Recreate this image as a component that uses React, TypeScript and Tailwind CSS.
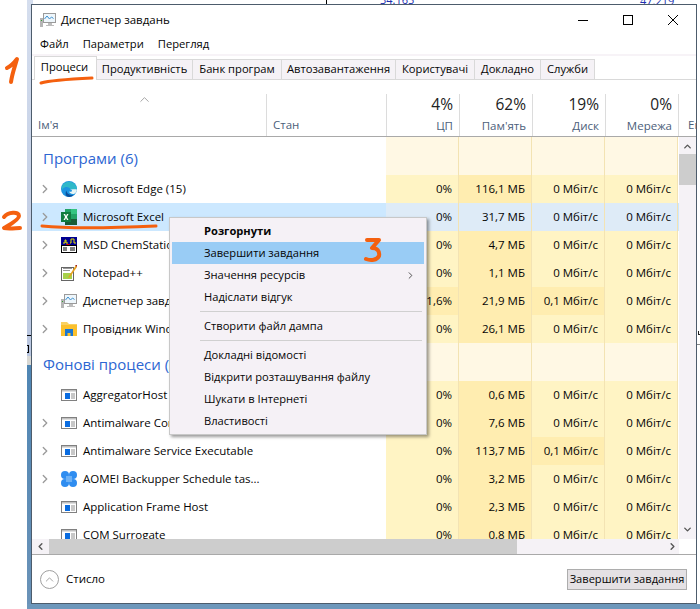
import { ChevronRight, ChevronUp, ChevronDown, ChevronLeft } from "lucide-react";

type Row = { name: string; icon: string; arrow: boolean; cpu: string; mem: string; disk: string; net: string };

const apps: Row[] = [
  { name: "Microsoft Edge (15)", icon: "edge", arrow: true, cpu: "0%", mem: "116,1 МБ", disk: "0 Мбіт/с", net: "0 Мбіт/с" },
  { name: "Microsoft Excel", icon: "excel", arrow: true, cpu: "0%", mem: "31,7 МБ", disk: "0 Мбіт/с", net: "0 Мбіт/с" },
  { name: "MSD ChemStation", icon: "chem", arrow: true, cpu: "0%", mem: "4,7 МБ", disk: "0 Мбіт/с", net: "0 Мбіт/с" },
  { name: "Notepad++", icon: "notepad", arrow: true, cpu: "0%", mem: "1,1 МБ", disk: "0 Мбіт/с", net: "0 Мбіт/с" },
  { name: "Диспетчер завдань", icon: "taskmgr", arrow: true, cpu: "1,6%", mem: "21,9 МБ", disk: "0,1 Мбіт/с", net: "0 Мбіт/с" },
  { name: "Провідник Windows", icon: "folder", arrow: true, cpu: "0%", mem: "26,1 МБ", disk: "0 Мбіт/с", net: "0 Мбіт/с" },
];

const background: Row[] = [
  { name: "AggregatorHost", icon: "svc", arrow: false, cpu: "0%", mem: "0,6 МБ", disk: "0 Мбіт/с", net: "0 Мбіт/с" },
  { name: "Antimalware Core Service", icon: "svc", arrow: true, cpu: "0%", mem: "7,6 МБ", disk: "0 Мбіт/с", net: "0 Мбіт/с" },
  { name: "Antimalware Service Executable", icon: "svc", arrow: true, cpu: "0%", mem: "113,7 МБ", disk: "0,1 Мбіт/с", net: "0 Мбіт/с" },
  { name: "AOMEI Backupper Schedule tas...", icon: "aomei", arrow: true, cpu: "0%", mem: "3,2 МБ", disk: "0 Мбіт/с", net: "0 Мбіт/с" },
  { name: "Application Frame Host", icon: "svc", arrow: false, cpu: "0%", mem: "2,3 МБ", disk: "0 Мбіт/с", net: "0 Мбіт/с" },
  { name: "COM Surrogate", icon: "svc", arrow: false, cpu: "0%", mem: "0,8 МБ", disk: "0 Мбіт/с", net: "0 Мбіт/с" },
];

const tabs = [
  { label: "Продуктивність", width: "w-[96px]" },
  { label: "Банк програм", width: "w-[89px]" },
  { label: "Автозавантаження", width: "w-[114px]" },
  { label: "Користувачі", width: "w-[79px]" },
  { label: "Докладно", width: "w-[66px]" },
  { label: "Служби", width: "w-[54px]" },
];

function AppIcon({ kind }: { kind: string }) {
  if (kind === "edge")
    return (
      <svg width="16" height="16" viewBox="0 0 16 16">
        <circle cx="8" cy="8" r="8" fill="#1c93e0" />
        <path d="M1.500 4C4 0 12-1 15 5c.5 1 .8 2 .9 3.500H9.500C9 6.500 6 5.500 3.500 6.500 2.500 7 1.500 8 1 9c-.5-2 0-3.500.5-5z" fill="#2fb8c8" />
        <path d="M5.500 9.500c0 3 3 5 7 4.500C10.500 16 8 16.300 6 15.500 4 14 4.500 11 5.500 9.500z" fill="#0a4f9c" />
        <path d="M9 8.500c3 0 6-.5 6.800 0C16 11 14 13 12 13c-2 0-3.500-1-4-2.500C9 11 11 11 11 9.800 11 9 10 8.700 9 8.500z" fill="#e8f6f5" />
      </svg>
    );
  if (kind === "excel")
    return (
      <svg width="16" height="16" viewBox="0 0 16 16">
        <rect x="4" y="0" width="12" height="16" fill="#21a366" />
        <rect x="10" y="0" width="6" height="5" fill="#33c481" />
        <rect x="4" y="10" width="12" height="6" fill="#185c37" />
        <rect x="0" y="3" width="10" height="10" fill="#107c41" />
        <path d="M2.500 5h1.600L5 7l1-2h1.500L5.900 8l1.600 3H6L5 9l-1 2H2.500l1.600-3z" fill="#fff" />
      </svg>
    );
  if (kind === "chem")
    return (
      <svg width="16" height="16" viewBox="0 0 16 16">
        <rect x="0" y="0" width="16" height="8" fill="#000090" />
        <path d="M2 6h2V3h1v3h2M9 6h1V2h3v4h2" fill="none" stroke="#e6e600" strokeWidth="1" />
        <path d="M5 7h4L7 10z" fill="#e00000" />
        <rect x="0.500" y="8.500" width="15" height="7" fill="#fff" stroke="#000" />
        <path d="M2 11h4M9 11h5M2 13h4M9 13h5" stroke="#000" />
      </svg>
    );
  if (kind === "notepad")
    return (
      <svg width="16" height="16" viewBox="0 0 16 16">
        <rect x="0.500" y="2.500" width="12" height="13" fill="#fff" stroke="#666" />
        <rect x="2" y="8" width="9" height="6" fill="#a6d14b" />
        <path d="M2 3.500h9M2 5.500h7" stroke="#999" />
        <path d="M15 0L8 11l-1 2 2-1 7-10z" fill="#e8a020" />
        <path d="M14 0h2v2z" fill="#a02020" />
      </svg>
    );
  if (kind === "taskmgr") return <MonitorIcon />;
  if (kind === "folder")
    return (
      <svg width="16" height="16" viewBox="0 0 16 16">
        <path d="M0 1h6l2 2h8v12H0z" fill="#f9d162" />
        <rect x="0" y="4" width="16" height="11" fill="#fbc02d" />
        <path d="M4 15V8h8v7h-2.500v-3h-3v3z" fill="#1976d2" />
      </svg>
    );
  if (kind === "aomei")
    return (
      <svg width="16" height="16" viewBox="0 0 16 16">
        <circle cx="4" cy="4" r="4" fill="#2f8df0" />
        <circle cx="12" cy="4" r="4" fill="#2f8df0" />
        <circle cx="4" cy="12" r="4" fill="#2f8df0" />
        <circle cx="12" cy="12" r="4" fill="#2f8df0" />
        <rect x="5" y="5" width="6" height="6" fill="#6db1f5" />
      </svg>
    );
  return (
    <svg width="16" height="16" viewBox="0 0 16 16">
      <rect x="0.500" y="2.500" width="15" height="11" fill="#fff" stroke="#808080" />
      <rect x="1" y="3" width="14" height="1.500" fill="#c0c0c0" />
      <rect x="4" y="6" width="5" height="6" fill="#0a6ce0" />
      <path d="M10 7h4M10 9h4M10 11h4" stroke="#909090" />
    </svg>
  );
}

function MonitorIcon() {
  return (
    <svg width="16" height="16" viewBox="0 0 16 16">
      <rect x="0" y="6" width="3" height="9" fill="#b5b5b5" />
      <rect x="1" y="8" width="1" height="1" fill="#30a030" />
      <rect x="3.500" y="1.500" width="12" height="9" fill="#eef6fb" stroke="#9a9a9a" />
      <path d="M4.500 7l2.500-3 2.500 3 2-2 2 1.500" fill="none" stroke="#3a8fd0" />
      <path d="M8 11h4v2h2v1H6v-1h2z" fill="#bdbdbd" />
    </svg>
  );
}

function DataRow({ row, selected }: { row: Row; selected?: boolean }) {
  const cell = "h-full flex items-center justify-end pr-[6px] pb-[1px] border-r border-[#f3e3b3]";
  const base = selected ? "bg-[#deebf7]" : "bg-[#fff4c4]";
  const memBg = selected ? "bg-[#deebf7]" : "bg-[#ffedb0]";
  return (
    <div className={`flex h-[28px] shrink-0 ${selected ? "bg-[#cce8ff]" : ""}`}>
      <div className="w-[268px] shrink-0 flex items-center pb-[1px]">
        <span className="w-[24px] flex justify-center pl-[1px] shrink-0">
          {row.arrow && <ChevronRight size={14} strokeWidth={2.250} className="text-[#9a9a9a]" />}
        </span>
        <span className="ml-[5px] mr-[6px] shrink-0 flex">
          <AppIcon kind={row.icon} />
        </span>
        <span className="whitespace-nowrap">{row.name}</span>
      </div>
      <div className="w-[86px] shrink-0" />
      <div className={`w-[73px] shrink-0 ${cell} ${row.cpu === "1,6%" ? "bg-[#ffedb0]" : base}`}>{row.cpu}</div>
      <div className={`w-[73px] shrink-0 ${cell} ${memBg}`}>{row.mem}</div>
      <div className={`w-[73px] shrink-0 ${cell} ${row.disk === "0,1 Мбіт/с" ? "bg-[#ffedb0]" : base}`}>{row.disk}</div>
      <div className={`w-[73px] shrink-0 ${cell} ${base}`}>{row.net}</div>
    </div>
  );
}

function GroupRow({ title }: { title: string }) {
  const cell = "w-[73px] shrink-0 bg-[#fff8e4] border-r border-[#f3e3b3]";
  return (
    <div className="flex shrink-0 h-[38px]">
      <div className="w-[354px] shrink-0 flex items-end pb-[6px] pl-[11px] text-[15px] text-[#2d66d2]">{title}</div>
      <div className={cell} />
      <div className={cell} />
      <div className={cell} />
      <div className={cell} />
    </div>
  );
}

function HeadCol({ pct, label }: { pct: string; label: string }) {
  return (
    <div className="w-[73px] shrink-0 border-r border-[#dcdcdc] flex flex-col items-end pr-[6px]">
      <span className="text-[15.500px] leading-[20px] text-[#222]">{pct}</span>
      <span className="mt-[4px] leading-[16px] text-[#4c607a]">{label}</span>
    </div>
  );
}

function MenuItem({ label, bold, active, arrow }: { label: string; bold?: boolean; active?: boolean; arrow?: boolean }) {
  return (
    <div className={`h-[22px] flex items-center pl-[32px] pr-[8px] justify-between ${active ? "bg-[#99ccf5]" : ""} ${bold ? "font-bold" : ""}`}>
      <span>{label}</span>
      {arrow && <ChevronRight size={11} className="text-[#444]" />}
    </div>
  );
}

export default function App() {
  return (
    <div className="relative w-[700px] h-[609px] overflow-hidden bg-white font-['Open_Sans','Noto_Sans',sans-serif] text-[11.500px] text-[#050505]">
      {/* desktop behind the window */}
      <div className="absolute left-[27px] top-0 w-[6px] h-[356px] bg-linear-to-b from-[#d5deee] to-[#b9c6e0]" />
      <div className="absolute left-[27px] top-[356px] w-[6px] h-[9px] bg-[#d8d8d4]" />
      <div className="absolute left-[27px] top-[365px] w-[6px] h-[244px] bg-linear-to-b from-[#4f86b4] to-[#6b93b8]" />
      <div className="absolute left-[27px] top-[604px] w-[673px] h-[5px] bg-[#6d97bb]" />
      <div className="absolute left-[27px] top-[335px] w-[5px] h-px bg-black" />
      <div className="absolute left-[27px] top-[345px] w-[2px] h-[8px] border-r border-y border-black" />
      <div className="absolute left-[697px] top-[344px] w-[3px] h-px bg-[#888]" />
      <div className="absolute left-[698px] top-[331px] w-[2px] h-[4px] border-l border-b border-[#222]" />
      <div className="absolute left-[326px] top-0 w-px h-[5px] bg-black" />
      <div className="absolute left-[380px] top-[-8px] text-[#2030b0] text-[11px]">34.165</div>
      <div className="absolute left-[640px] top-[-7px] text-[#2030b0] text-[11px]">47.219</div>

      {/* task manager window */}
      <div className="absolute left-[31px] top-[4px] w-[666px] h-[600px] bg-white border border-[#4d5c6c] flex flex-col">
        <div className="h-[29px] shrink-0 flex items-center pl-[8px]">
          <span className="flex mr-[5px]"><MonitorIcon /></span>
          <span>Диспетчер завдань</span>
          <div className="ml-auto flex items-center gap-[35px] pr-[18px]">
            <svg width="10" height="10" viewBox="0 0 10 10"><path d="M0 5.500h10" stroke="#000" /></svg>
            <svg width="10" height="10" viewBox="0 0 10 10"><rect x="0.500" y="0.500" width="9" height="9" fill="none" stroke="#000" /></svg>
            <svg width="10" height="10" viewBox="0 0 10 10"><path d="M0 0l10 10M10 0L0 10" stroke="#000" /></svg>
          </div>
        </div>
        <div className="h-[20px] shrink-0 flex items-center gap-[14px] pl-[8px] pt-[1px] text-[11.200px]">
          <span>Файл</span>
          <span>Параметри</span>
          <span>Перегляд</span>
        </div>
        <div className="h-[2px] shrink-0 bg-[#f7f3f7]" />
        <div className="h-[24px] shrink-0 flex items-end pl-[2px] border-b border-[#d9d9d9] text-[11.200px]">
          <div className="h-[24px] w-[63px] pr-[2px] justify-center border border-b-0 border-[#d9d9d9] bg-white flex items-center -mb-px pb-[2px]">Процеси</div>
          {tabs.map((t) => (
            <div key={t.label} className={`h-[20px] shrink-0 justify-center whitespace-nowrap border-r border-t border-[#d9d9d9] bg-[#f5f2f6] flex items-center ${t.width}`}>{t.label}</div>
          ))}
        </div>
        <div className="h-[57px] shrink-0 flex border-b border-[#a9a9a9]">
          <div className="w-[235px] shrink-0 border-r border-[#dcdcdc] relative mt-[14px] flex items-end pb-[3px] pl-[6px] text-[#4c607a]">
            Ім'я
            <ChevronUp size={15} strokeWidth={1.500} className="absolute left-[105px] top-[-2px] text-[#a0a0a0]" />
          </div>
          <div className="w-[120px] shrink-0 mt-[14px] border-r border-[#dcdcdc] flex items-end pb-[3px] pl-[6px] text-[#4c607a]">Стан</div>
          <div className="flex mt-[14px]">
            <HeadCol pct="4%" label="ЦП" />
            <HeadCol pct="62%" label="Пам'ять" />
            <HeadCol pct="19%" label="Диск" />
            <HeadCol pct="0%" label="Мережа" />
          </div>
          <div className="mt-[14px] pl-[9px] flex items-end pb-[3px] text-[#4c607a] overflow-hidden">Ен</div>
        </div>
        <div className="flex flex-1 min-h-0">
          <div className="flex-1 min-w-0 flex flex-col overflow-hidden">
            <div className="flex-1 min-h-0 overflow-hidden flex flex-col">
              <GroupRow title="Програми (6)" />
              {apps.map((r, i) => <DataRow key={r.name} row={r} selected={i === 1} />)}
              <GroupRow title="Фонові процеси (97)" />
              {background.map((r) => <DataRow key={r.name} row={r} />)}
            </div>
          </div>
          <div className="w-[17px] shrink-0 bg-[#f5f2f6] flex flex-col items-center">
            <ChevronUp size={11} strokeWidth={3} className="text-[#555] mt-[4px]" />
            <div className="w-full h-[31px] bg-[#cdcdcd] mt-[2px]" />
            <ChevronDown size={11} strokeWidth={3} className="text-[#555] mt-auto mb-[4px]" />
          </div>
        </div>
        <div className="h-[15px] shrink-0 flex items-center bg-[#f5f2f6]">
          <div className="w-[17px] flex justify-center"><ChevronLeft size={11} strokeWidth={3} className="text-[#555]" /></div>
          <div className="w-[468px] h-full bg-[#cdcdcd]" />
          <div className="w-[162px] flex justify-end pr-[1px]"><ChevronRight size={11} strokeWidth={3} className="text-[#555]" /></div>
          <div className="flex-1 h-full bg-white" />
        </div>
        <div className="h-[49px] shrink-0 border-t border-[#a9a9a9] flex items-center pl-[8px] pr-[9px]">
          <span className="w-[19px] h-[19px] rounded-full border border-[#a0a0a0] flex items-center justify-center">
            <ChevronUp size={13} strokeWidth={1.500} className="text-[#909090]" />
          </span>
          <span className="ml-[7px]">Стисло</span>
          <div className="ml-auto h-[21px] w-[120px] justify-center text-[11.100px] border border-[#adadad] bg-[#e4e1e4] flex items-center">Завершити завдання</div>
        </div>
      </div>

      {/* context menu */}
      <div className="absolute left-[169px] top-[217px] w-[258px] h-[218px] bg-[#f5f1f6] border border-[#c8c8c8] shadow-[2px_2px_3px_rgba(0,0,0,0.4)] p-[2px] text-[11.150px]">
        <MenuItem label="Розгорнути" bold />
        <MenuItem label="Завершити завдання" active />
        <MenuItem label="Значення ресурсів" arrow />
        <MenuItem label="Надіслати відгук" />
        <div className="h-px bg-[#d0d0d0] my-[3px] ml-[28px] mr-[2px]" />
        <MenuItem label="Створити файл дампа" />
        <div className="h-px bg-[#d0d0d0] my-[3px] ml-[28px] mr-[2px]" />
        <MenuItem label="Докладні відомості" />
        <MenuItem label="Відкрити розташування файлу" />
        <MenuItem label="Шукати в Інтернеті" />
        <MenuItem label="Властивості" />
      </div>

      {/* hand-drawn annotations */}
      <svg className="absolute left-0 top-0 pointer-events-none" width="700" height="609" fill="none" stroke="#f4600f" strokeLinecap="round" strokeLinejoin="round">
        <path d="M7 68c4-2 7-5 10-9-2 7-5 15-6 23" strokeWidth="4" />
        <path d="M41 83c10-3 30-4 51-5" strokeWidth="3" />
        <path d="M4 217c4-5 15-6 15-1 0 4-10 9-15 12 5 1 12 0 16 0" strokeWidth="4" />
        <path d="M42 226c30 3 70 2 114 0" strokeWidth="3" />
        <path d="M367 240h12l-7 8c5 0 8 3 7 8-2 4-8 5-13 3" strokeWidth="4" />
      </svg>
    </div>
  );
}
